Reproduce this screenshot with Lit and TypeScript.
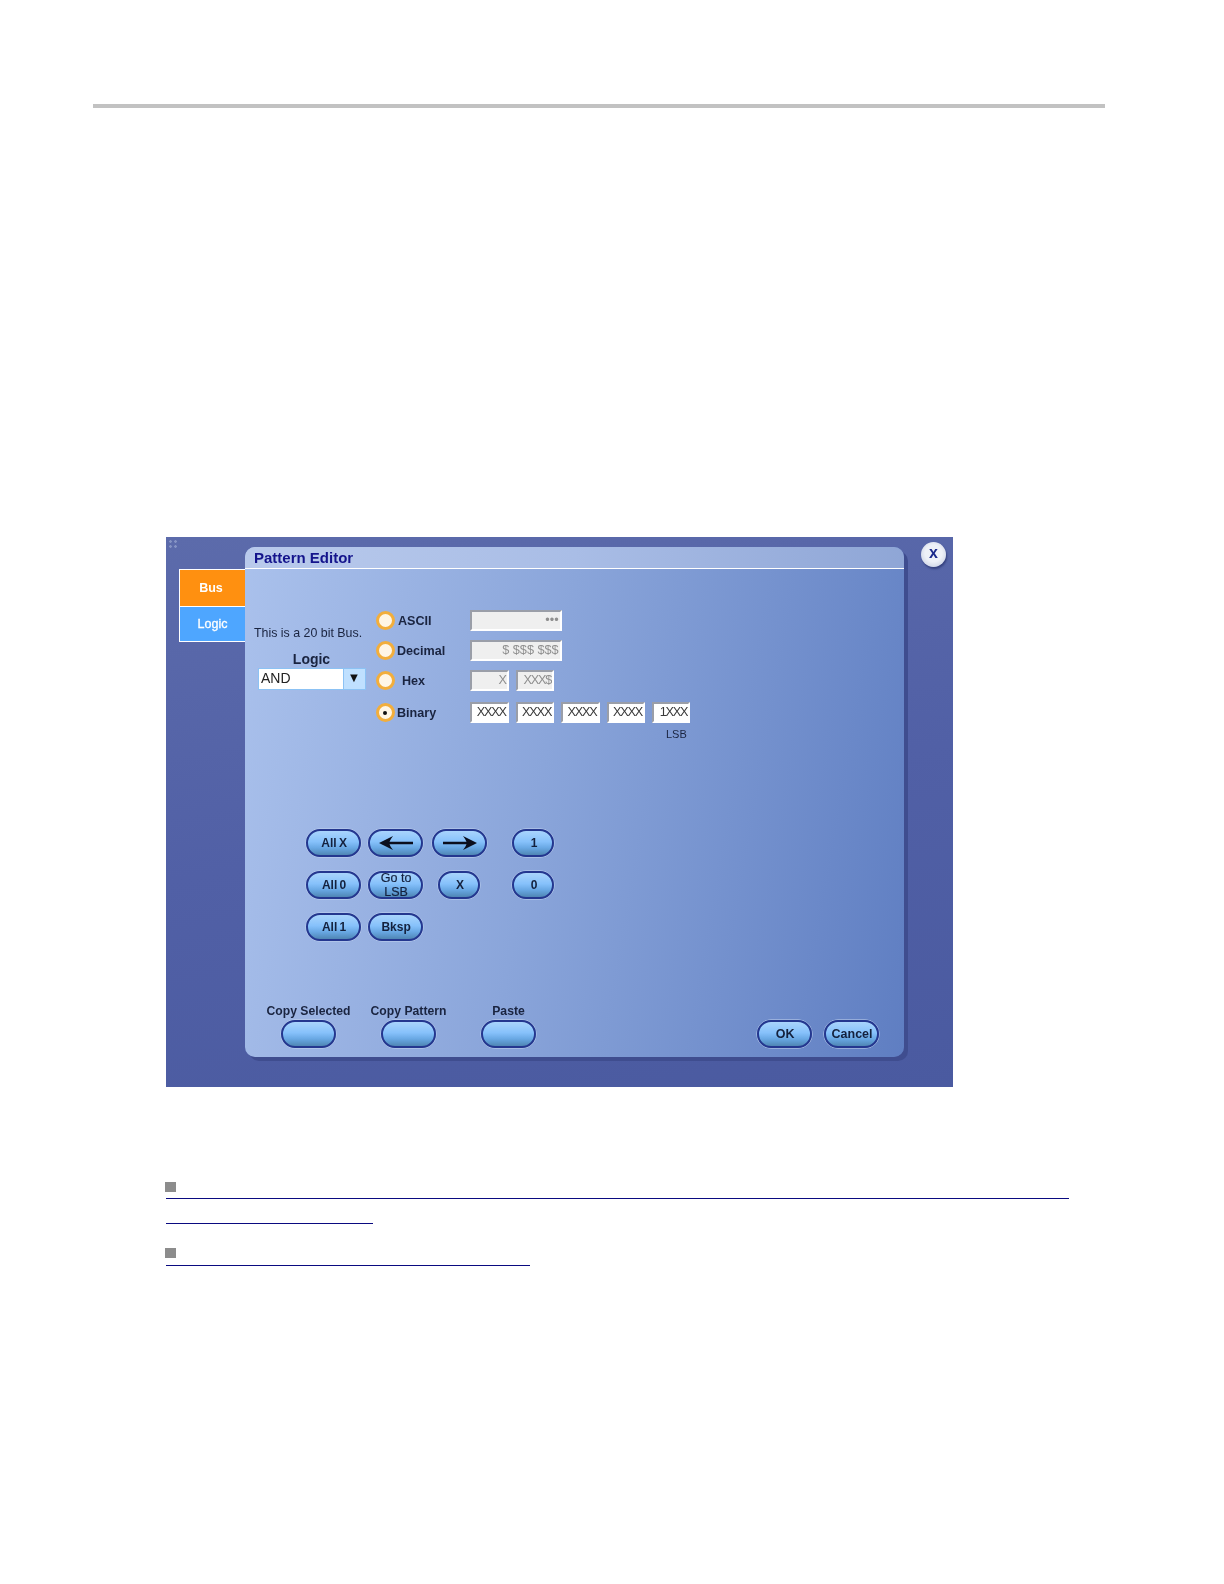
import { LitElement, html, css } from "lit";
import { customElement } from "lit/decorators.js";

@customElement("app-root")
export class AppRoot extends LitElement {
  static styles = css`
    :host { display: block; height: 1584px; background: #fff; font-family: "Liberation Sans", Arial, sans-serif; overflow: hidden; }
    .rule { height: 4px; background: #c2c2c2; margin: 104px 119px 0 93px; }
    .screen { position: relative; box-sizing: border-box; width: 787px; height: 550px; margin: 429px 0 0 166px; display: flex; align-items: flex-start;
      background: linear-gradient(170deg, #5c6bab 0%, #5160a6 50%, #4a5aa0 100%); filter: blur(0.4px); }
    .grip { position: absolute; left: 2px; top: 2px; width: 10px; height: 9px; background:
      radial-gradient(circle, #8593c4 1.2px, transparent 1.5px) 0 0 / 5px 5px; }
    .tabs { width: 66px; margin: 32px 0 0 13px; display: flex; flex-direction: column; }
    .tab { height: 36.5px; box-sizing: border-box; display: flex; align-items: center; justify-content: center; color: #fff; font-size: 12.5px; border: 1px solid #fff; border-right: 0; }
    .tab.bus { background: #ff9010; border-bottom: 0; font-weight: bold; padding-right: 3px; }
    .tab.logic { background: #4ea6ff; -webkit-text-stroke: 0.3px #fff; }
    .panel { width: 659px; height: 510px; margin-top: 10px; border-radius: 10px; box-shadow: 4px 4px 0 #3f4d8f; display: flex; flex-direction: column; overflow: hidden;
      background: linear-gradient(100deg, #aac1ec 0%, #8aa5da 45%, #5f7ec2 100%); }
    .title { flex: none; box-sizing: border-box; padding: 2px 0 0 9px; border-bottom: 1px solid #fff; height: 22px; color: #14148c; font-size: 15px; font-weight: bold;
      background: linear-gradient(90deg, #b9caec 0%, #a9bde6 50%, #8fa6d6 100%); }
    .top { display: flex; }
    .left { width: 131px; flex: none; padding: 57px 0 0 9px; box-sizing: border-box; color: #1a2440; }
    .info { font-size: 12.4px; line-height: 14px; white-space: nowrap; }
    .logic-label { font-size: 14px; font-weight: bold; line-height: 16px; margin-top: 11px; text-align: center; width: 115px; }
    .select { display: flex; width: 107.5px; height: 22px; margin: 1px 0 0 4px; box-sizing: border-box; border: 1px solid #8cc2f4; background: #fff; }
    .select .val { flex: 1; font-size: 14px; line-height: 19px; padding-left: 2px; color: #222; }
    .select .arrow { width: 22px; background: #bfe0ff; border-left: 1px solid #8cc2f4; display: flex; align-items: center; justify-content: center; font-size: 13px; color: #111; padding-bottom: 3px; box-sizing: border-box; }
    .options { padding-top: 41px; display: flex; flex-direction: column; gap: 9px; }
    .row { display: flex; align-items: center; height: 21px; }
    .row.binary { margin-top: 2px; }
    .choice { width: 93.7px; display: flex; align-items: center; font-size: 12.6px; font-weight: bold; color: #1a2440; }
    .radio { width: 19px; height: 19px; box-sizing: border-box; border-radius: 50%; border: 3px solid #f2ae3c; background: #fff6e6; margin: 0 2.5px 0 -0.5px; display: flex; align-items: center; justify-content: center; flex: none; }
    .radio i { width: 4px; height: 4px; border-radius: 50%; background: #111; }
    .pad-a { margin-left: 1px; }
    .pad-h { margin-left: 5px; }
    .fields { display: flex; gap: 7px; margin-left: 0.7px; }
    .fields.wide { margin-left: 0; }
    .field { width: 38.4px; height: 21px; box-sizing: border-box; border: 2px solid; border-color: #9a9ea8 #fff #fff #9a9ea8; background: #efefef; color: #8f8f8f; font-size: 12.7px; line-height: 17px; text-align: right; padding-right: 1px; white-space: nowrap; overflow: hidden; letter-spacing: -1.2px; }
    .field.long { width: 92px; letter-spacing: 0; padding-right: 1px; }
    .field.on { background: #fff; color: #3a3a3a; }
    .lsb { font-size: 11px; line-height: 12px; margin: 5px 0 0 290px; color: #1a2440; }
    .keys { margin: 89px 0 0 60.7px; display: grid; grid-template-columns: 62px 64px 80.6px 42px; row-gap: 14.2px; width: max-content; grid-auto-rows: 28px; }
    .btn { box-sizing: border-box; height: 28px; width: 55.4px; border-radius: 14px; border: 2px solid #24378f; display: flex; align-items: center; justify-content: center; text-align: center; padding: 0 0 0 1.5px;
      background: linear-gradient(180deg, #a9d4fc 0%, #86c1fb 45%, #69a8e4 70%, #4f86b4 100%); color: #14213d; font-size: 12px; font-weight: bold; line-height: 12px; box-shadow: 0 0 0 0.5px #c5d5f0; }
    .btn.s { width: 42px; }
    .btn.x { margin-left: 6.6px; }
    .btn.all { word-spacing: -1px; }
    .btn.two { font-weight: normal; font-size: 12.5px; line-height: 14px; -webkit-text-stroke: 0.2px #14213d; }
    .btn.big { font-size: 12.5px; }
    .btn svg { display: block; }
    .footer { margin-top: auto; padding: 0 25px 9.5px 13.5px; display: flex; justify-content: space-between; align-items: flex-end; }
    .copies { display: flex; }
    .copy { width: 100px; display: flex; flex-direction: column; align-items: center; gap: 1.6px; color: #1a2440; font-size: 12.2px; font-weight: bold; line-height: 14px; white-space: nowrap; }
    .oks { display: flex; gap: 11.6px; }
    .close { width: 25px; height: 25px; margin: 5px 0 0 17px; border-radius: 50%; box-sizing: border-box; display: flex; align-items: center; justify-content: center; color: #1b2a8c; font-size: 16px; font-weight: bold; line-height: 20px; padding-bottom: 3px;
      background: radial-gradient(circle at 50% 45%, #eef1f8 45%, #d5dbea 72%, #9aa6c6 100%); box-shadow: 1px 2px 2px #36427f; }
    .links { margin: 95px 0 0 165px; }
    .bullet { width: 11px; height: 10px; background: #8c8c8c; }
    .line { height: 1px; background: #0a0a80; margin: 6px 0 0 1px; }
    .l1 { width: 903px; }
    .l2 { width: 207px; margin-top: 24px; }
    .l3 { width: 364px; margin-top: 7px; }
    .b2 { margin-top: 24px; }
  `;

  private radio(on = false) {
    return html`<span class="radio">${on ? html`<i></i>` : ""}</span>`;
  }

  render() {
    return html`
      <div class="rule"></div>
      <div class="screen">
        <div class="grip"></div>
        <div class="tabs">
          <div class="tab bus">Bus</div>
          <div class="tab logic">Logic</div>
        </div>
        <div class="panel">
          <div class="title">Pattern Editor</div>
          <div class="top">
            <div class="left">
              <div class="info">This is a 20 bit Bus.</div>
              <div class="logic-label">Logic</div>
              <div class="select"><span class="val">AND</span><span class="arrow">▼</span></div>
            </div>
            <div>
              <div class="options">
                <div class="row"><div class="choice">${this.radio()}<span class="pad-a">ASCII</span></div><div class="fields wide"><div class="field long">•••</div></div></div>
                <div class="row"><div class="choice">${this.radio()}<span>Decimal</span></div><div class="fields wide"><div class="field long">$ $$$ $$$</div></div></div>
                <div class="row"><div class="choice">${this.radio()}<span class="pad-h">Hex</span></div><div class="fields"><div class="field">X</div><div class="field">XXX$</div></div></div>
                <div class="row binary"><div class="choice">${this.radio(true)}<span>Binary</span></div><div class="fields">
                  <div class="field on">XXXX</div><div class="field on">XXXX</div><div class="field on">XXXX</div><div class="field on">XXXX</div><div class="field on">1XXX</div>
                </div></div>
              </div>
              <div class="lsb">LSB</div>
            </div>
          </div>
          <div class="keys">
            <div class="btn all">All X</div>
            <div class="btn"><svg width="36" height="16" viewBox="0 0 36 16"><path d="M1 8 L15 1 Q12 5 11.5 6.8 H35 V9.2 H11.5 Q12 11 15 15 Z" fill="#0b0f1e"/></svg></div>
            <div class="btn"><svg width="36" height="16" viewBox="0 0 36 16"><path d="M35 8 L21 1 Q24 5 24.5 6.8 H1 V9.2 H24.5 Q24 11 21 15 Z" fill="#0b0f1e"/></svg></div>
            <div class="btn s">1</div>
            <div class="btn all">All 0</div>
            <div class="btn two">Go to<br />LSB</div>
            <div class="btn s x">X</div>
            <div class="btn s">0</div>
            <div class="btn all">All 1</div>
            <div class="btn">Bksp</div>
          </div>
          <div class="footer">
            <div class="copies">
              <div class="copy">Copy Selected<div class="btn"></div></div>
              <div class="copy">Copy Pattern<div class="btn"></div></div>
              <div class="copy">Paste<div class="btn"></div></div>
            </div>
            <div class="oks">
              <div class="btn big">OK</div>
              <div class="btn big">Cancel</div>
            </div>
          </div>
        </div>
        <div class="close">x</div>
      </div>
      <div class="links">
        <div class="bullet"></div>
        <div class="line l1"></div>
        <div class="line l2"></div>
        <div class="bullet b2"></div>
        <div class="line l3"></div>
      </div>
    `;
  }
}
